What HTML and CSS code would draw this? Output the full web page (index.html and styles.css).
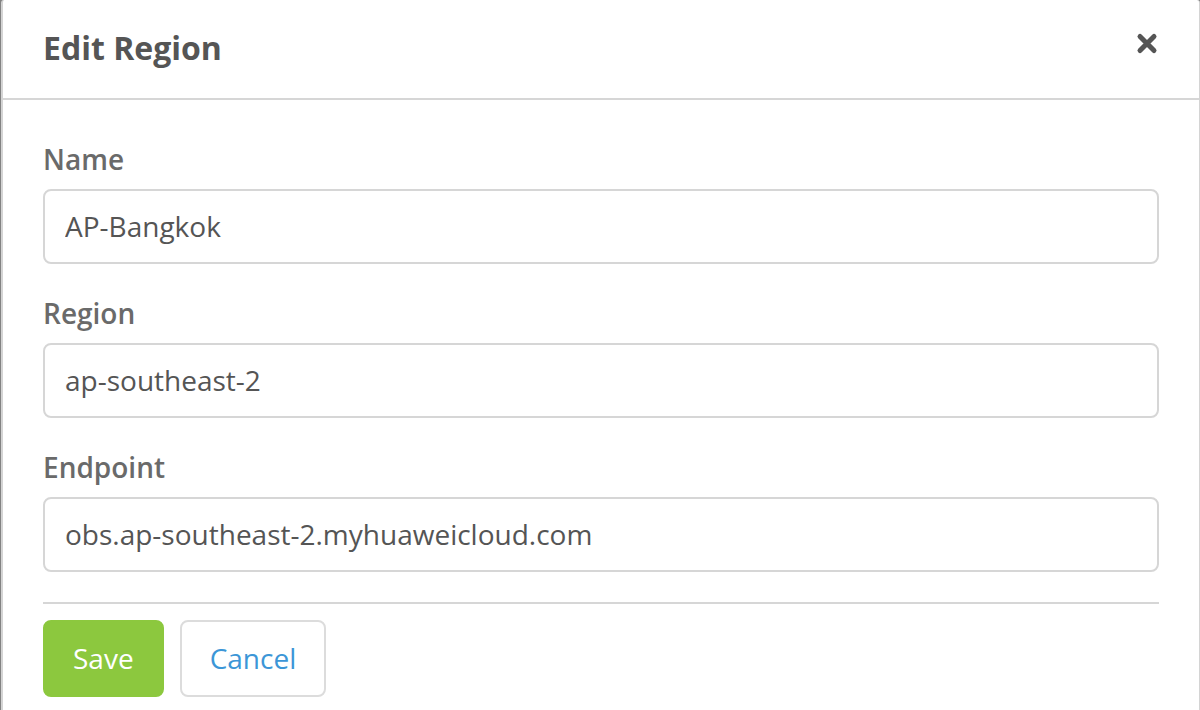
FILE: index.html
```html
<!DOCTYPE html>
<html lang="en">
<head>
<meta charset="utf-8">
<title>Edit Region</title>
<link rel="stylesheet" href="styles.css">
</head>
<body>
<main class="modal">
  <header class="modal-header">
    <h1 class="modal-title">Edit Region</h1>
    <button class="close" type="button" aria-label="Close">
      <svg class="close-icon" viewBox="0 0 24 24" aria-hidden="true"><path d="M5 4.500 19 18.500M19 4.500 5 18.500"/></svg>
    </button>
  </header>
  <form class="modal-body">
    <div class="field">
      <label class="label" for="name">Name</label>
      <input class="input" id="name" type="text" value="AP-Bangkok">
    </div>
    <div class="field">
      <label class="label" for="region">Region</label>
      <input class="input" id="region" type="text" value="ap-southeast-2">
    </div>
    <div class="field">
      <label class="label" for="endpoint">Endpoint</label>
      <input class="input" id="endpoint" type="text" value="obs.ap-southeast-2.myhuaweicloud.com">
    </div>
    <div class="actions">
      <button class="button button-save" type="button">Save</button>
      <button class="button button-cancel" type="button">Cancel</button>
    </div>
  </form>
</main>
</body>
</html>
```

FILE: styles.css
```css
* {
  box-sizing: border-box;
}

body {
  margin: 0;
  padding-left: 1px;
  background: #828282;
  color: #555;
  font-family: "Open Sans", sans-serif;
  font-size: 28px;
}

.modal {
  min-height: 100vh;
  border-left: 2px solid #d4d4d4;
  border-right: 1px solid #d4d4d4;
  border-radius: 3px 3px 0 0;
  background: #fff;
}

.modal-header {
  display: flex;
  align-items: flex-start;
  justify-content: space-between;
  padding: 26px 40px 28px;
  border-bottom: 2px solid #d6d6d6;
}

.modal-title {
  margin: 0;
  font-size: 32px;
  font-weight: 700;
  line-height: 44px;
}

.close {
  display: flex;
  margin: 6px 0 0;
  padding: 0;
  border: 0;
  background: none;
  color: #555;
}

.close-icon {
  width: 24px;
  height: 24px;
  fill: none;
  stroke: currentColor;
  stroke-width: 5;
  stroke-linecap: round;
}

.modal-body {
  padding: 40px 40px 12px;
}

.field {
  margin-bottom: 30px;
}

.label {
  display: block;
  margin-bottom: 11px;
  color: #6a6a6a;
  font-weight: 600;
  line-height: 38px;
}

.input {
  display: block;
  width: 100%;
  height: 75px;
  padding: 0 20px 2px;
  border: 2px solid #d6d6d6;
  border-radius: 8px;
  background: #fff;
  color: #555;
  font: inherit;
}

.actions {
  display: flex;
  gap: 16px;
  padding-top: 16px;
  border-top: 2px solid #d6d6d6;
}

.button {
  height: 77px;
  padding: 0 28px 2px;
  border: 2px solid #dcdcdc;
  border-radius: 8px;
  background: #fff;
  font: inherit;
}

.button-save {
  border-color: #8cc83e;
  background: #8cc83e;
  color: #fff;
}

.button-cancel {
  color: #3c96d7;
}
```
